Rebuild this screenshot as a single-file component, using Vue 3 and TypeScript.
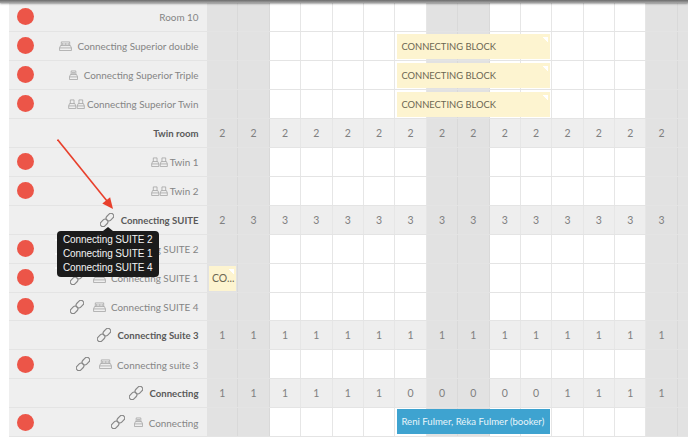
<script setup lang="ts">
type Row = {
  name: string
  dot?: boolean
  bed?: 'double' | 'single' | 'twin'
  link?: boolean
  total?: boolean
  counts?: number[]
}
const weekend = [0, 1, 7, 8, 14, 15]
const cols = Array.from({ length: 16 }, (_, i) => i)
const rows: Row[] = [
  { name: 'Room 10', dot: true },
  { name: 'Connecting Superior double', dot: true, bed: 'double' },
  { name: 'Connecting Superior Triple', dot: true, bed: 'single' },
  { name: 'Connecting Superior Twin', dot: true, bed: 'twin' },
  { name: 'Twin room', total: true, counts: Array(15).fill(2) },
  { name: 'Twin 1', dot: true, bed: 'twin' },
  { name: 'Twin 2', dot: true, bed: 'twin' },
  { name: 'Connecting SUITE', total: true, link: true, counts: [2, 3, 3, 3, 3, 3, 3, 3, 3, 3, 3, 3, 3, 3, 3] },
  { name: 'Connecting SUITE 2', dot: true, link: true, bed: 'double' },
  { name: 'Connecting SUITE 1', dot: true, link: true, bed: 'double' },
  { name: 'Connecting SUITE 4', dot: true, link: true, bed: 'double' },
  { name: 'Connecting Suite 3', total: true, link: true, counts: Array(15).fill(1) },
  { name: 'Connecting suite 3', dot: true, link: true, bed: 'double' },
  { name: 'Connecting', total: true, link: true, counts: [1, 1, 1, 1, 1, 1, 0, 0, 0, 0, 0, 1, 1, 1, 1] },
  { name: 'Connecting', dot: true, link: true, bed: 'single' },
]
const blockRows = [1, 2, 3]
const tips = ['Connecting SUITE 2', 'Connecting SUITE 1', 'Connecting SUITE 4']
</script>

<template>
  <div class="page">
    <div class="topshadow"></div>
    <div class="table">
      <div v-for="(r, i) in rows" :key="i" class="row" :class="{ total: r.total }">
        <div class="side">
          <span v-if="r.dot" class="dot"></span>
          <div class="label">
            <svg v-if="r.link" class="link" :class="{ withbed: r.bed }" viewBox="0 0 14 14">
              <g fill="none" stroke="#858585" stroke-width="1.1">
                <rect x="5.7" y="1.4" width="8.4" height="5.4" rx="2.7" transform="rotate(-45 9.9 4.1)" />
                <rect x="-0.1" y="7.2" width="8.4" height="5.4" rx="2.7" transform="rotate(-45 4.1 9.9)" />
              </g>
            </svg>
            <svg v-if="r.bed === 'double'" class="bed" viewBox="0 0 14 11">
              <g fill="none" stroke="#a6a6a6" stroke-width="0.9">
                <path d="M2.4 5V1h9.2V5M1.6 5h10.8L13.5 7.6V10.5H.5V7.6zM.5 7.6h13" />
                <path d="M3.2 3.2h7.6" stroke-width="1.6" stroke-dasharray="1 .6" />
              </g>
            </svg>
            <svg v-else-if="r.bed === 'single'" class="bed single" viewBox="0 0 10 11">
              <g fill="none" stroke="#a6a6a6" stroke-width="0.9">
                <path d="M2.4 5V1h5.2V5M1.6 5h6.8L9.5 7.6V10.5H.5V7.6zM.5 7.6h9" />
                <path d="M3.2 3.2h3.6" stroke-width="1.4" />
              </g>
            </svg>
            <svg v-else-if="r.bed === 'twin'" class="bed twin" viewBox="0 0 18 11">
              <g fill="none" stroke="#a6a6a6" stroke-width="0.9">
                <path d="M2.2 5V1h4.1V5M1.4 5h5.7L8.2 7.6V10.5H.4V7.6zM.4 7.6h7.8" />
                <path d="M11.7 5V1h4.1V5M10.9 5h5.7L17.6 7.6V10.5H9.8V7.6zM9.8 7.6h7.8" />
              </g>
            </svg>
            <span class="name">{{ r.name }}</span>
          </div>
        </div>
        <div
          v-for="c in cols"
          :key="c"
          class="cell"
          :class="{ weekend: weekend.includes(c) }"
        >{{ r.counts?.[c] ?? '' }}</div>
        <div v-if="blockRows.includes(i)" class="block yellow">CONNECTING BLOCK</div>
        <div v-if="i === 9" class="block yellow small">CO...</div>
        <div v-if="i === 14" class="block blue">Reni Fulmer, Réka Fulmer (booker)</div>
      </div>
    </div>
    <ul class="tooltip">
      <li v-for="t in tips" :key="t">{{ t }}</li>
    </ul>
    <svg class="arrow" viewBox="0 0 70 90">
      <path d="M0.5 0.5 L50 62" stroke="#e8402c" stroke-width="1.6" fill="none" />
      <path d="M56 70 L45.3 64.5 L53.1 58.3 Z" fill="#e8402c" />
    </svg>
  </div>
</template>

<style>
html, body { margin: 0; background: #fff; }
</style>

<style scoped>
.page {
  position: relative;
  width: 688px;
  height: 444px;
  overflow: hidden;
  background: #fff;
  font-family: Lato, "Open Sans", sans-serif;
}
.topshadow {
  position: relative;
  z-index: 2;
  height: 3px;
  background: linear-gradient(#6b6b6b, #a8a8a8);
  box-shadow: 0 1px 2px rgba(0, 0, 0, 0.35);
}
.table {
  margin-left: 9px;
  width: 700px;
}
.row {
  position: relative;
  display: grid;
  grid-template-columns: 198px repeat(16, 31.4px);
  height: 28.96px;
  box-sizing: border-box;
  border-bottom: 1px solid #e4e4e4;
}
.side {
  display: flex;
  align-items: center;
  background: #efefef;
  padding: 0 8.5px 0 8px;
  box-sizing: border-box;
  min-width: 0;
}
.dot {
  width: 17px;
  height: 17px;
  border-radius: 50%;
  background: #ec5548;
  flex: none;
}
.label {
  display: flex;
  align-items: center;
  margin-left: auto;
  font-size: 9.9px;
  color: #858585;
  white-space: nowrap;
}
.name {
  position: relative;
  top: 0.5px;
}
.total .label {
  color: #5a5a5a;
  font-weight: 700;
  font-size: 9.6px;
}
.link {
  width: 14px;
  height: 14px;
  margin-right: 7px;
}
.link.withbed {
  margin-right: 9px;
}
.bed {
  width: 13px;
  height: 10px;
  margin-right: 5px;
}
.bed.single { width: 9px; margin-right: 6px; }
.bed.twin { width: 17px; margin-right: 2px; }
.cell {
  border-right: 1px solid #e6e6e6;
  display: flex;
  align-items: center;
  justify-content: center;
  font-size: 10.5px;
  color: #808080;
}
.weekend {
  background: #e2e2e2;
  border-right-color: #d9d9d9;
}
.total .cell:not(.weekend) {
  background: #eeeeee;
}
.block {
  position: absolute;
  top: 2px;
  height: 25px;
  left: 388.4px;
  width: 152.6px;
  display: flex;
  align-items: center;
  padding-left: 4px;
  box-sizing: border-box;
  font-size: 9.4px;
  color: #6b6652;
  white-space: nowrap;
}
.yellow {
  background:
    linear-gradient(225deg, #fff 0 4px, transparent 4px) no-repeat right 2px top 3px / 6px 6px,
    #fdf4d0;
}
.yellow.small {
  left: 200px;
  width: 27px;
  padding-left: 3px;
  font-size: 10.5px;
}
.blue {
  top: 1px;
  background: #3ea3d0;
  color: #e9f5fa;
  font-size: 9.6px;
}
.tooltip {
  position: absolute;
  left: 57px;
  top: 231px;
  width: 102px;
  height: 46px;
  box-sizing: border-box;
  margin: 0;
  padding: 2px 0 0 6px;
  list-style: none;
  background: #1b1b1b;
  border-radius: 4px;
  color: #f4f4f4;
  font-size: 10px;
  letter-spacing: -0.1px;
  line-height: 14px;
  white-space: nowrap;
  font-family: "Liberation Sans", sans-serif;
}
.tooltip li {
  position: relative;
}
.tooltip li::before {
  content: "";
  position: absolute;
  left: -8px;
  top: 6px;
  width: 2px;
  height: 2px;
  border-radius: 50%;
  background: #fff;
}
.tooltip::before {
  content: "";
  position: absolute;
  left: 46px;
  top: -4px;
  border-left: 5px solid transparent;
  border-right: 5px solid transparent;
  border-bottom: 4px solid #1b1b1b;
}
.arrow {
  position: absolute;
  left: 57px;
  top: 139px;
  width: 70px;
  height: 90px;
}
</style>
